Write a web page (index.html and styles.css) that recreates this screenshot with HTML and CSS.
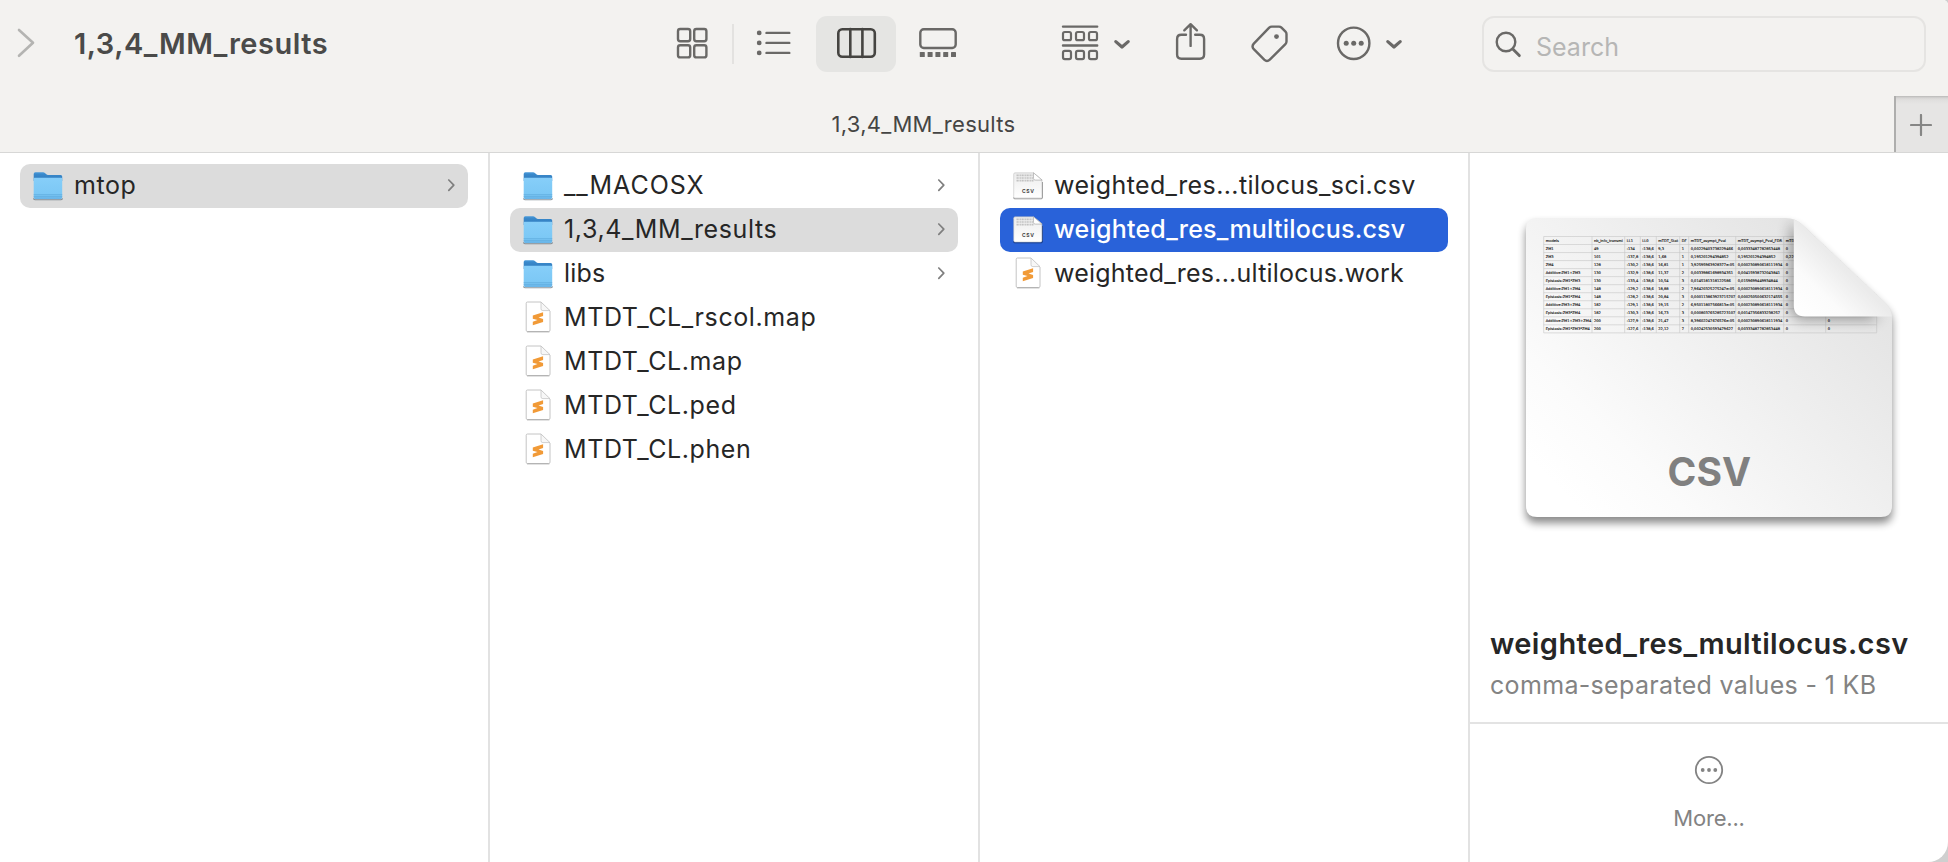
FILE: index.html
```html
<!DOCTYPE html>
<html lang="en">
<head>
<meta charset="utf-8">
<title>1,3,4_MM_results</title>
<link rel="stylesheet" href="styles.css">
</head>
<body>
<svg class="defs" aria-hidden="true">
  <defs>
    <linearGradient id="folder-front" x1="0" y1="0" x2="0" y2="1"><stop offset="0" stop-color="#86cef9"/><stop offset="0.75" stop-color="#7cc8f5"/><stop offset="1" stop-color="#68b5e8"/></linearGradient>
    <linearGradient id="folder-back" x1="0" y1="0" x2="0" y2="1"><stop offset="0" stop-color="#4a9bdb"/><stop offset="0.25" stop-color="#3a89cb"/><stop offset="1" stop-color="#2f79ba"/></linearGradient>
    <linearGradient id="paper" x1="0" y1="0" x2="0" y2="1"><stop offset="0" stop-color="#ececec"/><stop offset="1" stop-color="#fff"/></linearGradient>
    <symbol id="folder" viewBox="0 0 30 44">
      <path d="M.6 34.3q0 1.500 1.400 1.500h26q1.400 0 1.400-1.500" fill="none" stroke="#5f6f7b" stroke-opacity=".75" stroke-width="1.100"/>
      <path d="M.7 10q0-1.800 1.600-1.800h7.800q1 0 1.800.8l1.400 1.300q.7.6 1.600.6h12.800q1.500 0 1.500 1.600V17H.7z" fill="url(#folder-back)"/>
      <path d="M.7 14.700q0-.9.9-.9h26.700q.9 0 .9.9v18.900q0 1.400-1.400 1.400H2.100q-1.400 0-1.400-1.400z" fill="url(#folder-front)"/>
      <path d="M.7 30.600h28.500M.7 32.600h28.500" stroke="#62aede" stroke-width=".7"/>
    </symbol>
    <symbol id="text-file" viewBox="0 0 30 44">
      <path d="M4.500 6h13.500l9 9v19.200q0 1.300-1.300 1.300H4.500q-1.300 0-1.300-1.300V7.300q0-1.300 1.300-1.300z" fill="#fff" stroke="#bdbdbd" stroke-width=".9"/>
      <path d="M4 35.900h22.400" stroke="#a5a5a5" stroke-width=".8"/>
      <path d="M18 6v6.800q0 1.800 1.800 1.800H27z" fill="#f7f7f7" stroke="#c4c4c4" stroke-width=".8"/>
      <path d="M9.800 19.600l10.300-3.400v3.800l-4.600 1.500 4.600 1.400v3.100L9.800 29.300v-3.600l4.700-1.600-4.700-1.400z" fill="#f19a37"/>
    </symbol>
    <symbol id="csv-file" viewBox="0 0 30 44">
      <path d="M.5 33.500q0 1.300 1.300 1.300h26.400q1.300 0 1.300-1.300V18" fill="none" stroke="#000" stroke-opacity=".4"/>
      <path d="M2 8.800h18.600l8.300 7v16.700q0 1.500-1.500 1.500H2.200q-1.500 0-1.500-1.500V10.300q0-1.500 1.300-1.500z" fill="url(#paper)" stroke="#bbb" stroke-width=".5"/>
      <path d="M3.500 11.300h16M3.500 14h16.500M3.500 16.700h17" stroke="#c2c2c2" stroke-width="1.700" stroke-dasharray="2.200 .8 1.400 .6"/>
      <path d="M20.500 8.800v5.600q0 1.700 1.700 1.700h6.900z" fill="#fff" stroke="#a9a9a9" stroke-width=".7"/>
      <text x="15.300" y="29.200" class="csv-mini">CSV</text>
    </symbol>
    <symbol id="disclosure" viewBox="0 0 10 44"><path d="M1.800 16l5 5.200-5 5.200" fill="none" stroke="currentColor" stroke-width="1.700" stroke-linecap="round" stroke-linejoin="round"/></symbol>
  </defs>
</svg>

<div class="window">
  <header class="header">
    <div class="toolbar">
      <svg class="tool forward" width="20" height="56" viewBox="16 16 20 56"><path d="M19 30l14 12.800-14 13"/></svg>
      <h1 class="title">1,3,4_MM_results</h1>
      <div class="views">
        <svg class="tool" width="32" height="56" viewBox="676 16 32 56"><rect x="678" y="29" width="12.200" height="12.200" rx="2.200"/><rect x="694.200" y="29" width="12.200" height="12.200" rx="2.200"/><rect x="678" y="45.200" width="12.200" height="12.200" rx="2.200"/><rect x="694.200" y="45.200" width="12.200" height="12.200" rx="2.200"/></svg>
        <i class="separator"></i>
        <svg class="tool list" width="36" height="56" viewBox="756 16 36 56"><path d="M766.500 32.900h22.800M766.500 42.900h22.800M766.500 52.900h22.800"/><g class="solid"><circle cx="759.200" cy="32.900" r="2.400"/><circle cx="759.200" cy="42.900" r="2.400"/><circle cx="759.200" cy="52.900" r="2.400"/></g></svg>
        <div class="view-selected"><svg class="tool" width="80" height="56" viewBox="816 16 80 56"><rect x="838.300" y="29.200" width="36.500" height="27.600" rx="4"/><path d="M850.300 29v28M862.400 29v28"/></svg></div>
        <svg class="tool gallery" width="40" height="56" viewBox="918 16 40 56"><rect x="920.300" y="29.200" width="35.400" height="18.800" rx="3.500"/><g class="solid"><rect x="919.800" y="52" width="5" height="5" rx=".6"/><rect x="927.600" y="52" width="5" height="5" rx=".6"/><rect x="935.400" y="52" width="5" height="5" rx=".6"/><rect x="943.200" y="52" width="5" height="5" rx=".6"/><rect x="951" y="52" width="5" height="5" rx=".6"/></g></svg>
      </div>
      <svg class="tool group" width="72" height="56" viewBox="1060 16 72 56"><path d="M1063 26.600h34.200M1063 45.500h34.200"/><g class="thin"><rect x="1063" y="32" width="8" height="8.200" rx="1.800"/><rect x="1076" y="32" width="8" height="8.200" rx="1.800"/><rect x="1089" y="32" width="8" height="8.200" rx="1.800"/><rect x="1063" y="50.900" width="8" height="8.200" rx="1.800"/><rect x="1076" y="50.900" width="8" height="8.200" rx="1.800"/><rect x="1089" y="50.900" width="8" height="8.200" rx="1.800"/></g><path class="caret" d="M1115.800 41.600l6.200 5.400 6.200-5.400"/></svg>
      <svg class="tool share" width="32" height="56" viewBox="1175 16 32 56"><path d="M1186 34.700h-4.700q-4.200 0-4.200 4.200v15.600q0 4.200 4.200 4.200h18.600q4.200 0 4.200-4.200V38.900q0-4.200-4.200-4.200h-4.700M1190.600 45.900V24.800M1184.300 30.300l6.300-6.100 6.300 6.100"/></svg>
      <svg class="tool tag" width="40" height="56" viewBox="1250 16 40 56"><path d="M1269.200 27.600q1.100-1 2.600-1h7.200q1.500 0 2.500 1l4 4q1 1 1 2.500v7.400q0 1.500-1.100 2.600l-15.600 15.600q-2.800 2.700-5.600 0l-10.400-10.500q-2.500-2.800 0-5.600z"/><circle class="solid" cx="1276.500" cy="36.600" r="2.400"/></svg>
      <svg class="tool actions" width="68" height="56" viewBox="1336 16 68 56"><circle cx="1353.700" cy="43.300" r="15.700"/><g class="solid"><circle cx="1346.200" cy="43.300" r="2.500"/><circle cx="1353.700" cy="43.300" r="2.500"/><circle cx="1361.200" cy="43.300" r="2.500"/></g><path class="caret" d="M1387.800 41.600l6.200 5.400 6.200-5.400"/></svg>
      <div class="search">
        <svg class="tool" width="28" height="52" viewBox="1494 18 28 52"><circle cx="1506" cy="42" r="9.300"/><path class="handle" d="M1512.800 48.900l6.500 6.700"/></svg>
        <span class="search-text">Search</span>
      </div>
    </div>
    <div class="tabbar">
      <div class="tab"><span class="tab-text">1,3,4_MM_results</span></div>
      <div class="new-tab"><svg width="22" height="22" viewBox="0 0 22 22"><path d="M11 1v20M1 11h20"/></svg></div>
    </div>
  </header>

  <main class="columns">
    <section class="column">
      <div class="row active"><svg class="icon"><use href="#folder"/></svg><span class="name">mtop</span><svg class="arrow"><use href="#disclosure"/></svg></div>
    </section>
    <section class="column">
      <div class="row"><svg class="icon"><use href="#folder"/></svg><span class="name wide">__MACOSX</span><svg class="arrow"><use href="#disclosure"/></svg></div>
      <div class="row active"><svg class="icon"><use href="#folder"/></svg><span class="name">1,3,4_MM_results</span><svg class="arrow"><use href="#disclosure"/></svg></div>
      <div class="row"><svg class="icon"><use href="#folder"/></svg><span class="name snug">libs</span><svg class="arrow"><use href="#disclosure"/></svg></div>
      <div class="row"><svg class="icon"><use href="#text-file"/></svg><span class="name">MTDT_CL_rscol.map</span></div>
      <div class="row"><svg class="icon"><use href="#text-file"/></svg><span class="name">MTDT_CL.map</span></div>
      <div class="row"><svg class="icon"><use href="#text-file"/></svg><span class="name">MTDT_CL.ped</span></div>
      <div class="row"><svg class="icon"><use href="#text-file"/></svg><span class="name">MTDT_CL.phen</span></div>
    </section>
    <section class="column">
      <div class="row"><svg class="icon"><use href="#csv-file"/></svg><span class="name medium">weighted_res...tilocus_sci.csv</span></div>
      <div class="row selected"><svg class="icon"><use href="#csv-file"/></svg><span class="name snug">weighted_res_multilocus.csv</span></div>
      <div class="row"><svg class="icon"><use href="#text-file"/></svg><span class="name snug">weighted_res...ultilocus.work</span></div>
    </section>
    <aside class="preview">
      <svg class="document" width="478" height="400" viewBox="1470 153 478 400">
        <defs>
          <linearGradient id="sheet" gradientUnits="userSpaceOnUse" x1="1580" y1="510" x2="1840" y2="250"><stop offset="0" stop-color="#fff"/><stop offset=".2" stop-color="#fbfbfb"/><stop offset="1" stop-color="#e3e3e3"/></linearGradient>
          <linearGradient id="curl" gradientUnits="userSpaceOnUse" x1="1796" y1="314" x2="1842" y2="266"><stop offset="0" stop-color="#fff"/><stop offset=".5" stop-color="#fbfbfb"/><stop offset="1" stop-color="#ebebeb"/></linearGradient>
          <filter id="sheet-shadow" x="-10%" y="-10%" width="120%" height="125%"><feGaussianBlur stdDeviation="4.500"/></filter>
          <filter id="curl-shadow" x="-40%" y="-40%" width="180%" height="180%"><feGaussianBlur stdDeviation="7"/></filter>
          <path id="sheet-shape" d="M1537 218h249q9 0 15.500 6l83 78q7.500 7 7.500 15v189q0 11-11 11h-344q-11 0-11-11V229q0-11 11-11z"/>
          <clipPath id="sheet-clip"><use href="#sheet-shape"/></clipPath>
        </defs>
        <use href="#sheet-shape" transform="translate(0 6)" fill="#000" opacity=".46" filter="url(#sheet-shadow)"/>
        <use href="#sheet-shape" fill="url(#sheet)"/>
        <g clip-path="url(#sheet-clip)">
          <g id="table"></g>
          <path d="M1791 222v84q0 13 13 13h76z" fill="#000" opacity=".38" filter="url(#curl-shadow)"/>
        </g>
        <path d="M1793.800 219.500q4.200 1.400 7.700 4.500l83 78q6.500 6 7.500 14.500h-87.200q-11 0-11-11z" fill="url(#curl)"/>
        <text class="kind" x="1709.300" y="485.500">CSV</text>
      </svg>
      <h2 class="file-name">weighted_res_multilocus.csv</h2>
      <p class="file-info">comma-separated values - 1 KB</p>
      <div class="more">
        <svg width="30" height="30" viewBox="0 0 30 30"><circle cx="15" cy="15" r="13.200"/><g class="dots"><circle cx="8.700" cy="15" r="1.900"/><circle cx="15" cy="15" r="1.900"/><circle cx="21.300" cy="15" r="1.900"/></g></svg>
        <span class="more-text">More...</span>
      </div>
    </aside>
  </main>
</div>
<script src="table.js"></script>
</body>
</html>
```
FILE: styles.css
```css
* { box-sizing: border-box; }
html { background: #cfcfcf; }
body { margin: 0; font-family: Inter, "Liberation Sans", sans-serif; color: #262626; }
h1, h2, p { margin: 0; }
svg { display: block; flex: none; }
.defs { position: absolute; width: 0; height: 0; }

.window {
  width: 1948px;
  height: 862px;
  display: flex;
  flex-direction: column;
  overflow: hidden;
  background: #fff;
  border-radius: 0 5px 20px 0;
}

.header { height: 153px; flex: none; background: #f3f2f0; border-bottom: 1px solid #d7d7d6; }
.toolbar { display: flex; align-items: flex-start; height: 96px; padding: 16px 22px 0 16px; }
.tool { fill: none; stroke: #6a6967; stroke-width: 2.4; stroke-linecap: round; stroke-linejoin: round; }
.tool .solid { fill: #6a6967; stroke: none; }
.tool .thin { stroke-width: 2.2; }
.tool .caret { stroke-width: 3.2; }
.tool .handle { stroke-width: 2.9; }
.forward { stroke: #b4b4b2; stroke-width: 2.6; }
.title { width: 602px; margin-left: 38px; font-size: 29px; line-height: 55px; font-weight: 600; letter-spacing: .52px; color: #4a4a49; white-space: nowrap; }
.views { display: flex; }
.separator { width: 2px; height: 40px; margin: 8px 22px 0 24px; background: #e3e2e0; }
.view-selected { margin: 0 22px 0 24px; border-radius: 11px; background: #e5e5e3; }
.view-selected .tool { stroke: #454441; stroke-width: 2.6; }
.group { margin-left: 102px; }
.share { margin-left: 43px; }
.tag { margin-left: 43px; }
.actions { margin-left: 46px; }
.search { display: flex; flex: 1; height: 56px; margin-left: 78px; padding-left: 10px; border: 2px solid #e5e4e2; border-radius: 12px; }
.search-text { margin-left: 14px; font-size: 25px; line-height: 58px; color: #b6b6b5; }

.tabbar { display: flex; height: 56px; }
.tab { display: flex; flex: 1; justify-content: center; padding-right: 47px; font-size: 22px; line-height: 56px; letter-spacing: .3px; color: #454544; }
.new-tab { display: flex; align-items: center; width: 54px; padding: 1px 0 0 14px; border-left: 2px solid #aeaead; background: linear-gradient(#b9b9b8 0, #d6d5d4 2px, #e0dfde 4px, #e6e5e4 8px); }
.new-tab path { stroke: #868685; stroke-width: 2.2; stroke-linecap: round; }

.columns { display: flex; flex: 1; }
.column { width: 490px; padding: 11px 20px; border-right: 2px solid #e2e2e2; }
.row { display: flex; height: 44px; padding: 0 11px 0 13px; border-radius: 10px; }
.row.active { background: #dcdcdc; }
.row.selected { background: #2962d9; color: #fff; }
.row.selected .name { font-weight: 500; }
.icon { width: 30px; height: 44px; }
.name { flex: 1; margin-left: 11px; font-size: 25px; line-height: 42px; letter-spacing: .6px; white-space: nowrap; }
.name.wide { letter-spacing: .95px; }
.name.medium { letter-spacing: .38px; }
.name.snug { letter-spacing: .22px; }
.arrow { width: 10px; height: 44px; color: #7f7f7f; }
.csv-mini { font-size: 5px; font-weight: 700; letter-spacing: .6px; text-anchor: middle; fill: #444; }

.preview { flex: 1; display: flex; flex-direction: column; }
.cell { font: 3.6px "DejaVu Sans", sans-serif; fill: #222; stroke: #222; stroke-width: .15; }
.kind { font-size: 39px; font-weight: 700; fill: #808080; text-anchor: middle; }
.file-name { margin: 70px 0 0 20px; font-size: 29px; line-height: 42px; font-weight: 600; letter-spacing: .4px; white-space: nowrap; }
.file-info { margin: 0 0 16px 20px; font-size: 25px; line-height: 41px; letter-spacing: .33px; color: #838383; white-space: nowrap; }
.more { flex: 1; display: flex; flex-direction: column; align-items: center; padding-top: 31px; border-top: 2px solid #e3e3e3; color: #838383; }
.more svg { fill: none; stroke: #838383; stroke-width: 1.8; }
.more .dots { fill: #838383; stroke: none; }
.more-text { margin-top: 17px; font-size: 22px; line-height: 32px; letter-spacing: -.2px; }
```
FILE: table.js
```js
const NS = "http://www.w3.org/2000/svg";
const table = document.getElementById("table");
const edges = [1543.7, 1592, 1624.7, 1640.3, 1656.3, 1679.7, 1688.7, 1735.7, 1783.7, 1825.7, 1876.7];
const top0 = 236.5, step = 8.03;
const rows = [
  ["models", "nb_info_transmi", "LL1", "LL0", "mTDT_Stat", "DF", "mTDT_asympt_Pval", "mTDT_asympt_Pval_FDR", "mTDT_emp"],
  ["ZM1", "49", "-134", "-138,6", "9,3", "1", "0,00229403738229466", "0,00333487782853448", "0"],
  ["ZM3", "101", "-137,8", "-138,6", "1,68", "1", "0,195201294394852", "0,195201294394852", "0,22"],
  ["ZM4", "128", "-130,2", "-138,6", "16,81", "1", "3,92595963928377e-05", "0,000230890618111934", "0"],
  ["Additive:ZM1+ZM3", "130", "-132,9", "-138,6", "11,37", "2", "0,00339861698934351", "0,00415938732043841", "0"],
  ["Epistasis:ZM1*ZM3", "130", "-133,4", "-138,6", "10,54", "3", "0,0145181318122586", "0,0159699449934844", "0"],
  ["Additive:ZM1+ZM4", "148", "-129,2", "-138,6", "18,88", "2", "7,96420325275247e-05", "0,000230890618111934", "0"],
  ["Epistasis:ZM1*ZM4", "148", "-128,2", "-138,6", "20,84", "3", "0,000113863923715707", "0,000250500632174555", "0"],
  ["Additive:ZM3+ZM4", "182", "-129,1", "-138,6", "19,15", "2", "6,95011807566813e-05", "0,000230890618111934", "0"],
  ["Epistasis:ZM3*ZM4", "182", "-130,3", "-138,6", "16,73", "3", "0,000803765285723107", "0,00147356833238257", "0"],
  ["Additive:ZM1+ZM3+ZM4", "200", "-127,9", "-138,6", "21,47", "3", "8,39602247676576e-05", "0,000230890618111934", "0", "0"],
  ["Epistasis:ZM1*ZM3*ZM4", "200", "-127,6", "-138,6", "22,12", "7", "0,00242530593479627", "0,00333487782853448", "0", "0"]
];

function add(tag, attrs, text) {
  const el = document.createElementNS(NS, tag);
  for (const key in attrs) el.setAttribute(key, attrs[key]);
  if (text) el.textContent = text;
  table.append(el);
}

let grid = "";
for (let i = 0; i <= rows.length; i++) grid += `M${edges[0]} ${top0 + i * step}H${edges[10]}`;
for (const x of edges) grid += `M${x} ${top0}V${top0 + rows.length * step}`;
add("path", { d: grid, fill: "none", stroke: "#c6c6c6", "stroke-width": 0.6 });
rows.forEach((cells, r) => cells.forEach((text, c) =>
  add("text", { class: "cell", x: edges[c] + 2, y: top0 + r * step + 5.4 }, text)));
```
